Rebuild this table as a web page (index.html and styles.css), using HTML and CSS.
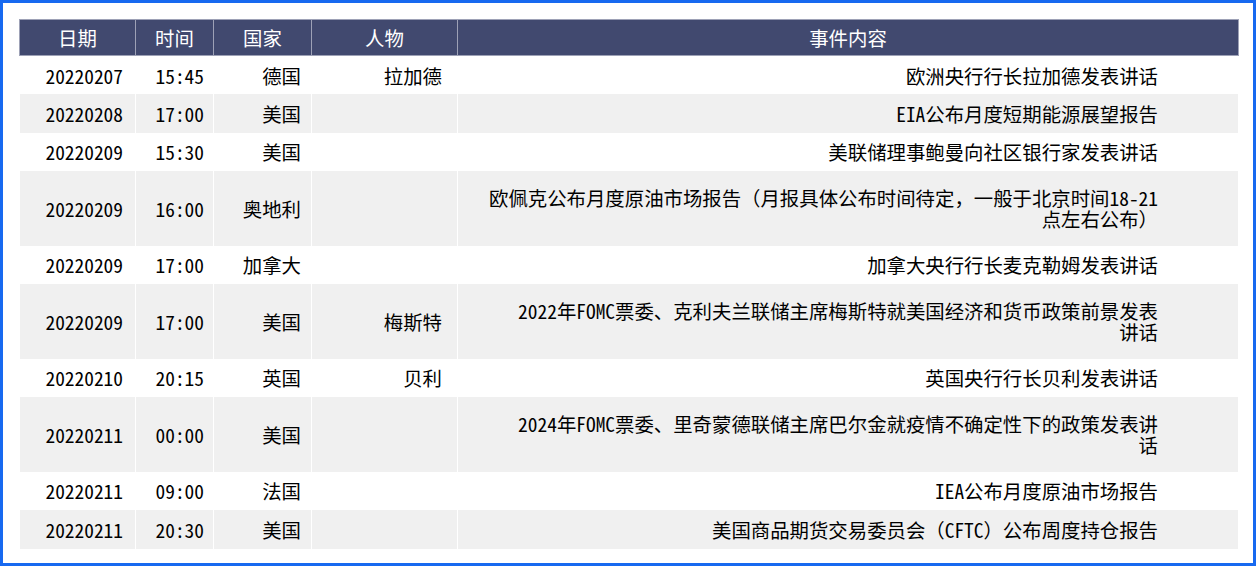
FILE: index.html
```html
<!DOCTYPE html>
<html lang="zh-CN">
<head>
<meta charset="utf-8">
<title>财经日历</title>
<link rel="stylesheet" href="styles.css">
</head>
<body>
<div class="frame">
  <table class="cal">
    <colgroup>
      <col class="c-date"><col class="c-time"><col class="c-country"><col class="c-person"><col class="c-event">
    </colgroup>
    <thead>
      <tr><th>日期</th><th>时间</th><th>国家</th><th>人物</th><th>事件内容</th></tr>
    </thead>
    <tbody>
      <tr class="r1"><td class="d">20220207</td><td class="t">15:45</td><td class="c">德国</td><td class="p">拉加德</td><td class="ev">欧洲央行行长拉加德发表讲话</td></tr>
      <tr class="r1 alt"><td class="d">20220208</td><td class="t">17:00</td><td class="c">美国</td><td class="p"></td><td class="ev">EIA公布月度短期能源展望报告</td></tr>
      <tr class="r1"><td class="d">20220209</td><td class="t">15:30</td><td class="c">美国</td><td class="p"></td><td class="ev">美联储理事鲍曼向社区银行家发表讲话</td></tr>
      <tr class="r2 alt"><td class="d">20220209</td><td class="t">16:00</td><td class="c">奥地利</td><td class="p"></td><td class="ev">欧佩克公布月度原油市场报告（月报具体公布时间待定，一般于北京时间18-21<br>点左右公布）</td></tr>
      <tr class="r1"><td class="d">20220209</td><td class="t">17:00</td><td class="c">加拿大</td><td class="p"></td><td class="ev">加拿大央行行长麦克勒姆发表讲话</td></tr>
      <tr class="r2 alt"><td class="d">20220209</td><td class="t">17:00</td><td class="c">美国</td><td class="p">梅斯特</td><td class="ev">2022年FOMC票委、克利夫兰联储主席梅斯特就美国经济和货币政策前景发表<br>讲话</td></tr>
      <tr class="r1"><td class="d">20220210</td><td class="t">20:15</td><td class="c">英国</td><td class="p">贝利</td><td class="ev">英国央行行长贝利发表讲话</td></tr>
      <tr class="r2 alt"><td class="d">20220211</td><td class="t">00:00</td><td class="c">美国</td><td class="p"></td><td class="ev">2024年FOMC票委、里奇蒙德联储主席巴尔金就疫情不确定性下的政策发表讲<br>话</td></tr>
      <tr class="r1"><td class="d">20220211</td><td class="t">09:00</td><td class="c">法国</td><td class="p"></td><td class="ev">IEA公布月度原油市场报告</td></tr>
      <tr class="r1 alt"><td class="d">20220211</td><td class="t">20:30</td><td class="c">美国</td><td class="p"></td><td class="ev">美国商品期货交易委员会（CFTC）公布周度持仓报告</td></tr>
    </tbody>
  </table>
</div>
</body>
</html>
```
FILE: styles.css
```css
html, body {
  margin: 0;
  padding: 0;
  background: #fff;
}
.frame {
  box-sizing: border-box;
  width: 1256px;
  height: 566px;
  border: 3px solid #1769f0;
  padding: 16px 15px 0 16px;
  font-family: "Noto Sans Mono CJK SC", "Noto Sans CJK SC", sans-serif;
  color: #000;
}
.cal {
  border-collapse: collapse;
  table-layout: fixed;
  width: 1219px;
  font-size: 19.4px;
}
.c-date { width: 116px; }
.c-time { width: 78px; }
.c-country { width: 98px; }
.c-person { width: 146px; }
.c-event { width: 781px; }
.cal th {
  height: 36px;
  padding: 0;
  background: #41496f;
  color: #fff;
  font-weight: normal;
  text-align: center;
  border: 1px solid #9da1b6;
  box-sizing: border-box;
}
.cal td {
  padding: 0 12px 0 0;
  text-align: right;
  vertical-align: middle;
  border-left: 1px solid #fff;
  border-right: 1px solid #fff;
  line-height: 21px;
  white-space: nowrap;
}
.cal td.t { padding-right: 9px; }
.cal td.c { padding-right: 10px; }
.cal td.p { padding-right: 15px; }
.cal td.ev { padding-right: 80px; }
.r1 { height: 38.5px; }
.r2 { height: 74.5px; }
.alt td { background: #f0f0f0; }
```
